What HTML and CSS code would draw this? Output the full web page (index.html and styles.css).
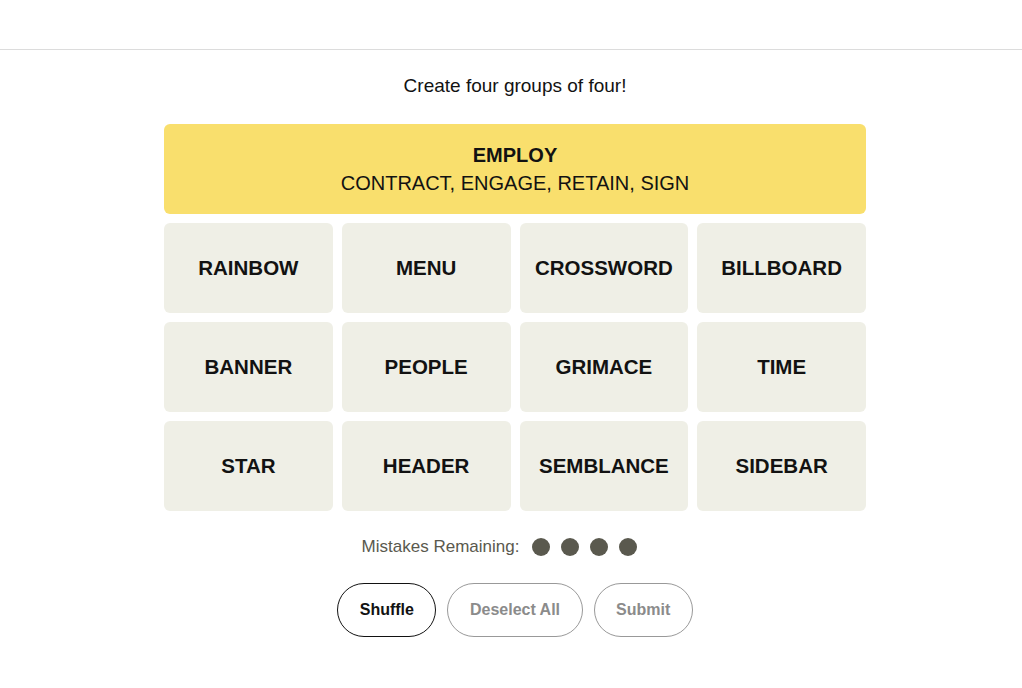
FILE: index.html
```html
<!DOCTYPE html>
<html lang="en">
<head>
<meta charset="utf-8">
<title>Connections</title>
<link rel="stylesheet" href="styles.css">
</head>
<body>
<header class="topbar"></header>
<main class="game">
  <p class="prompt">Create four groups of four!</p>
  <section class="board">
    <div class="solved solved-yellow">
      <div class="solved-title">EMPLOY</div>
      <div class="solved-words">CONTRACT, ENGAGE, RETAIN, SIGN</div>
    </div>
    <button class="tile">RAINBOW</button>
    <button class="tile">MENU</button>
    <button class="tile">CROSSWORD</button>
    <button class="tile">BILLBOARD</button>
    <button class="tile">BANNER</button>
    <button class="tile">PEOPLE</button>
    <button class="tile">GRIMACE</button>
    <button class="tile">TIME</button>
    <button class="tile">STAR</button>
    <button class="tile">HEADER</button>
    <button class="tile">SEMBLANCE</button>
    <button class="tile">SIDEBAR</button>
  </section>
  <div class="mistakes">
    <span class="mistakes-label">Mistakes Remaining:</span>
    <span class="dots">
      <span class="dot"></span><span class="dot"></span><span class="dot"></span><span class="dot"></span>
    </span>
  </div>
  <div class="actions">
    <button class="pill pill-active">Shuffle</button>
    <button class="pill pill-disabled">Deselect All</button>
    <button class="pill pill-disabled">Submit</button>
  </div>
</main>
</body>
</html>
```

FILE: styles.css
```css
* { box-sizing: border-box; }

html, body {
  margin: 0;
  padding: 0;
  background: #ffffff;
  color: #121212;
  font-family: "Liberation Sans", Arial, sans-serif;
}

.topbar {
  height: 50px;
  border-bottom: 1px solid #dcdcdc;
}

.game {
  display: flex;
  flex-direction: column;
  align-items: center;
  padding-left: 8px;
}

.prompt {
  margin: 24px 0 0;
  font-size: 19px;
  line-height: 24px;
  color: #121212;
}

.board {
  margin-top: 26px;
  width: 702px;
  display: grid;
  grid-template-columns: repeat(4, 1fr);
  grid-auto-rows: 90px;
  gap: 9px;
}

.solved {
  grid-column: 1 / span 4;
  border-radius: 6px;
  display: flex;
  flex-direction: column;
  align-items: center;
  justify-content: center;
  font-size: 20px;
  line-height: 28px;
  color: #121212;
}

.solved-yellow { background: #f9df6d; }

.solved-title { font-weight: 700; }

.tile {
  border: none;
  border-radius: 6px;
  background: #efefe6;
  color: #121212;
  font-family: inherit;
  font-size: 20.5px;
  font-weight: 700;
  padding: 0;
  cursor: pointer;
}

.mistakes {
  margin: 24px 31px 0 0;
  height: 24px;
  display: flex;
  align-items: center;
  gap: 13px;
  font-size: 17px;
  color: #5a594e;
}

.dots {
  display: flex;
  gap: 11px;
}

.dot {
  width: 18px;
  height: 18px;
  border-radius: 50%;
  background: #5a594e;
}

.actions {
  margin-top: 24px;
  display: flex;
  gap: 11px;
}

.pill {
  height: 54px;
  padding: 0 21.5px;
  border-radius: 999px;
  background: #ffffff;
  font-family: inherit;
  font-size: 16px;
  font-weight: 700;
  cursor: pointer;
}

.pill-active {
  border: 1px solid #121212;
  color: #121212;
}

.pill-disabled {
  border: 1px solid #999999;
  color: #8b8b8b;
}
```
